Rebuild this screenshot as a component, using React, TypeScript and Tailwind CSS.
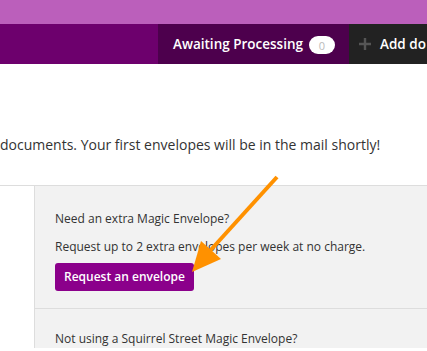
export default function App() {
  return (
    <div className="relative h-[351px] w-[427px] overflow-hidden bg-white font-['Open_Sans',sans-serif] text-[14px] text-[#333]">
      {/* top band */}
      <div className="h-[24px] bg-[#bb5fbb]" />

      {/* nav */}
      <div className="flex h-[40px] bg-[#6d006d]">
        <div className="ml-[158px] flex w-[191px] shrink-0 items-center bg-[#4d004d] pl-[15px]">
          <span className="text-[13.5px] font-semibold text-white">Awaiting Processing</span>
          <span className="ml-[6px] mt-[2px] flex h-[18px] w-[26px] items-center justify-center rounded-full bg-white text-[11px] leading-none text-[#bbb]">
            0
          </span>
        </div>
        <div className="flex flex-1 items-center overflow-hidden whitespace-nowrap bg-[#222] pl-[9px]">
          <svg width="14" height="14" viewBox="0 0 14 14" className="shrink-0">
            <path d="M7 1v12M1 7h12" stroke="#555" strokeWidth="2.4" />
          </svg>
          <span className="ml-[8px] text-[13.5px] font-semibold text-white">Add do</span>
        </div>
      </div>

      {/* message */}
      <div className="h-[121px] pt-[71px]">
        <p className="whitespace-nowrap leading-[20px]">
          documents. Your first envelopes will be in the mail shortly!
        </p>
      </div>

      {/* content */}
      <div className="flex border-t border-[#ddd] text-[12px]">
        <div className="w-[35px] shrink-0 border-r border-[#ddd]" />
        <div className="flex-1 bg-[#f2f2f2]">
          <div className="border-b border-[#ddd] pb-[17px] pl-[20px] pt-[24px]">
            <p className="leading-[18px]">Need an extra Magic Envelope?</p>
            <p className="mt-[10px] leading-[18px]">
              Request up to 2 extra envelopes per week at no charge.
            </p>
            <button className="mt-[7px] h-[28px] rounded-[3px] bg-[#8b008b] px-[9px] font-semibold text-white">
              Request an envelope
            </button>
          </div>
          <div className="pl-[20px] pt-[21px]">
            <p className="leading-[18px]">Not using a Squirrel Street Magic Envelope?</p>
          </div>
        </div>
      </div>

      {/* annotation arrow */}
      <svg className="pointer-events-none absolute left-0 top-0" width="427" height="351">
        <line x1="277" y1="177" x2="208" y2="253" stroke="#ff9100" strokeWidth="4" />
        <polygon points="192,272 201,241 221,259" fill="#ff9100" />
      </svg>
    </div>
  );
}
